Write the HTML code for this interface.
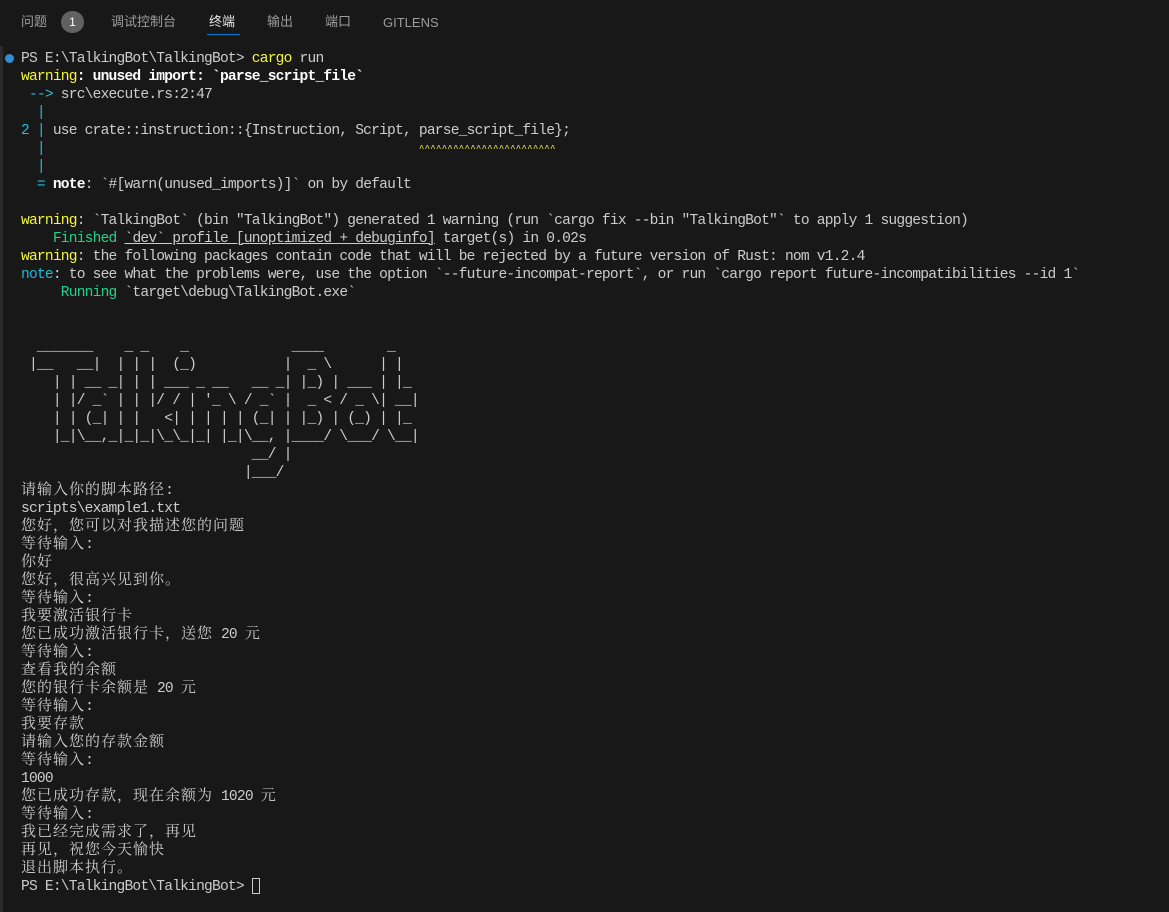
<!DOCTYPE html>
<html><head><meta charset="utf-8">
<style>
html,body{margin:0;padding:0;background:#181818;width:1169px;height:912px;overflow:hidden}
.tabs{position:absolute;top:0;left:0;width:1169px;height:44px;font-family:"Liberation Sans","Noto Sans CJK SC",sans-serif;font-size:13px;color:#9d9d9d}
.tab{position:absolute;top:13px;line-height:18px}
.act{color:#e7e7e7}
.ul{position:absolute;left:207px;top:34px;width:33px;height:1px;background:#0078d4}
.badge{position:absolute;left:61px;top:11px;width:23px;height:22px;border-radius:11px;background:#616161;color:#fff;font-size:12px;text-align:center;line-height:22px}
.leftbar{position:absolute;left:0;top:46px;width:3px;height:866px;background:#2b2b2b}
.dot{position:absolute;left:5px;top:54px;width:9px;height:9px;border-radius:5px;background:#2f8fd0}
pre{position:absolute;left:21px;top:50px;margin:0;font-family:"Liberation Mono","Noto Serif CJK SC",monospace;font-size:14.6px;letter-spacing:-0.8px;line-height:18px;color:#cccccc;white-space:pre}
.y{color:#f5f543}.g{color:#23d18b}.b{color:#29b8db}.w{color:#fff;font-weight:bold}
.c{font-family:"Liberation Mono","Noto Serif CJK SC",serif;font-size:15px;letter-spacing:1px}
.u{text-decoration:underline}
.sq{color:#f5f543;font-size:9px;letter-spacing:0.3px;vertical-align:top}
.cur{display:inline-block;width:8px;height:16px;border:1px solid #ccc;box-sizing:border-box;vertical-align:-4px}
</style></head><body>
<div class="tabs">
<span class="tab" style="left:21px">问题</span>
<div class="badge">1</div>
<span class="tab" style="left:111px">调试控制台</span>
<span class="tab act" style="left:209px">终端</span>
<div class="ul"></div>
<span class="tab" style="left:267px">输出</span>
<span class="tab" style="left:325px">端口</span>
<span class="tab" style="left:383px;top:14px">GITLENS</span>
</div>
<div class="leftbar"></div>
<div class="dot"></div>
<pre>PS E:\TalkingBot\TalkingBot&gt; <span class="y">cargo</span> run
<span class="y">warning</span><span class="w">: unused import: `parse_script_file`</span>
<span class="b"> --&gt;</span> src\execute.rs:2:47
<span class="b">  |</span>
<span class="b">2 |</span> use crate::instruction::{Instruction, Script, parse_script_file};
<span class="b">  |</span>                                               <span class="sq">^^^^^^^^^^^^^^^^^^^^^^^^</span>
<span class="b">  |</span>
<span class="b">  =</span> <span class="w">note</span>: `#[warn(unused_imports)]` on by default

<span class="y">warning</span>: `TalkingBot` (bin "TalkingBot") generated 1 warning (run `cargo fix --bin "TalkingBot"` to apply 1 suggestion)
    <span class="g">Finished</span> <span class="u">`dev` profile [unoptimized + debuginfo]</span> target(s) in 0.02s
<span class="y">warning</span>: the following packages contain code that will be rejected by a future version of Rust: nom v1.2.4
<span class="b">note</span>: to see what the problems were, use the option `--future-incompat-report`, or run `cargo report future-incompatibilities --id 1`
     <span class="g">Running</span> `target\debug\TalkingBot.exe`


  _______    _ _    _             ____        _
 |__   __|  | | |  (_)           |  _ \      | |
    | | __ _| | | ___ _ __   __ _| |_) | ___ | |_
    | |/ _` | | |/ / | '_ \ / _` |  _ &lt; / _ \| __|
    | | (_| | |   &lt;| | | | | (_| | |_) | (_) | |_
    |_|\__,_|_|_|\_\_|_| |_|\__, |____/ \___/ \__|
                             __/ |
                            |___/
<span class="c">请输入你的脚本路径:</span>
scripts\example1.txt
<span class="c">您好，您可以对我描述您的问题</span>
<span class="c">等待输入:</span>
<span class="c">你好</span>
<span class="c">您好，很高兴见到你。</span>
<span class="c">等待输入:</span>
<span class="c">我要激活银行卡</span>
<span class="c">您已成功激活银行卡，送您</span> 20 <span class="c">元</span>
<span class="c">等待输入:</span>
<span class="c">查看我的余额</span>
<span class="c">您的银行卡余额是</span> 20 <span class="c">元</span>
<span class="c">等待输入:</span>
<span class="c">我要存款</span>
<span class="c">请输入您的存款金额</span>
<span class="c">等待输入:</span>
1000
<span class="c">您已成功存款，现在余额为</span> 1020 <span class="c">元</span>
<span class="c">等待输入:</span>
<span class="c">我已经完成需求了，再见</span>
<span class="c">再见，祝您今天愉快</span>
<span class="c">退出脚本执行。</span>
PS E:\TalkingBot\TalkingBot&gt; <span class="cur"></span></pre>
</body></html>
